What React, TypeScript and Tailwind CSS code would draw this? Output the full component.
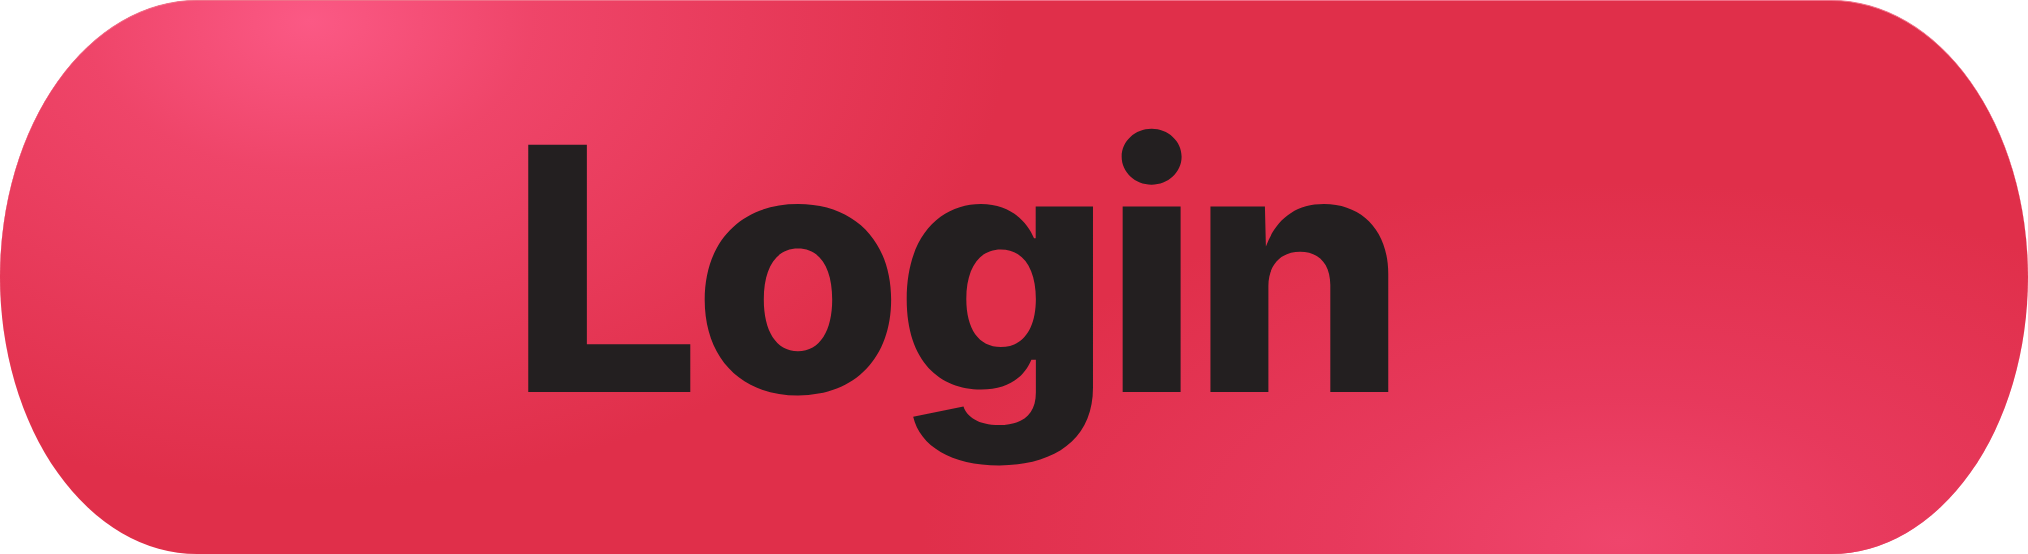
export default function App() {
  return (
    <div className="w-[2028px] h-[554px] bg-white">
      <button
        type="button"
        className="flex h-[554px] w-[2028px] items-start rounded-[197px/277px] border-t border-t-[#f07088] bg-[#e02f4a] bg-[radial-gradient(ellipse_700px_470px_at_310px_20px,#fb5985_0%,rgba(245,78,118,0.7)_32%,rgba(224,47,74,0)_100%),radial-gradient(ellipse_700px_360px_at_1620px_540px,#ef456c_0%,rgba(236,64,104,0.6)_40%,rgba(224,47,74,0)_100%)] pl-[509px] pt-[98px]"
      >
        <span className="font-['Inter',sans-serif] text-[340px] font-extrabold leading-none tracking-[-0.025em] text-[#231f20]">
          Login
        </span>
      </button>
    </div>
  );
}
